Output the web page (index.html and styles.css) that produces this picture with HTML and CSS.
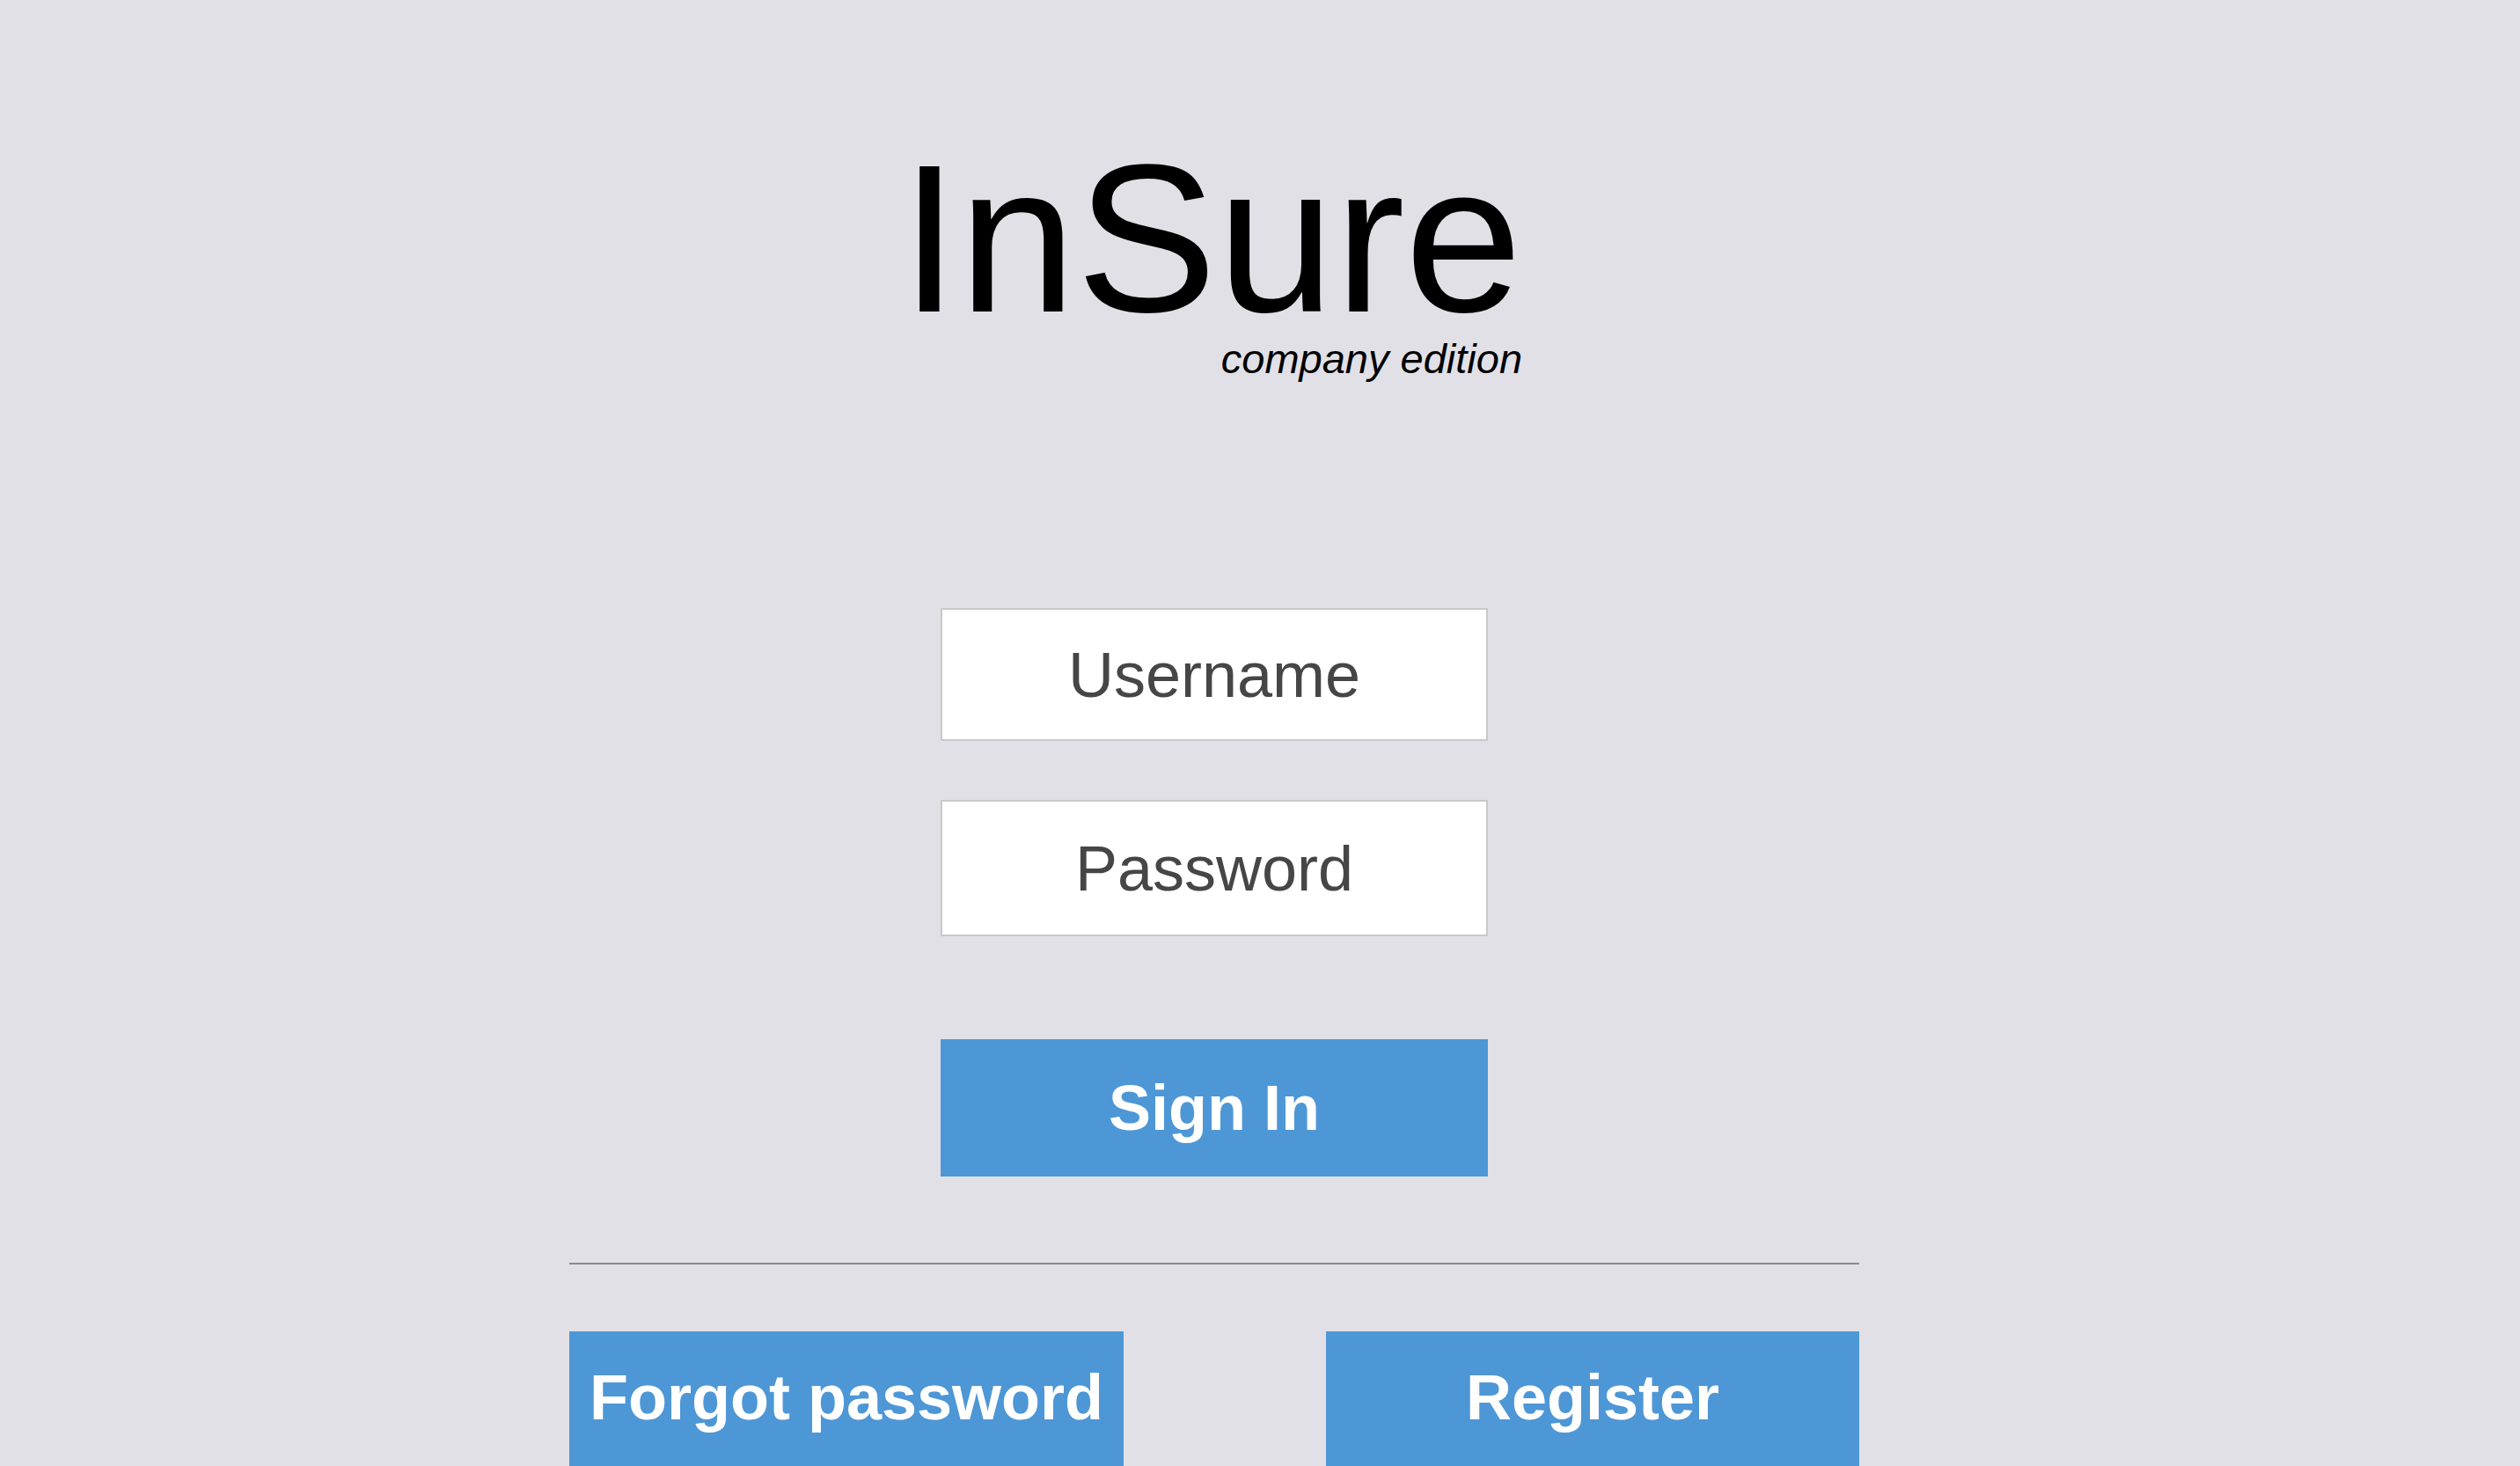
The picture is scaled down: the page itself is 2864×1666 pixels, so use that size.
FILE: index.html
```html
<!DOCTYPE html>
<html lang="en">
<head>
<meta charset="utf-8">
<title>InSure – Sign In</title>
<link rel="stylesheet" href="styles.css">
</head>
<body>
<main class="page">
  <header class="brand">
    <div class="logo">
      <div class="logo-name">InSure</div>
      <div class="logo-tag">company edition</div>
    </div>
  </header>
  <form class="login" onsubmit="return false">
    <input class="field field-user" type="text" placeholder="Username">
    <input class="field field-pass" type="password" placeholder="Password">
    <button class="btn btn-signin" type="submit">Sign In</button>
  </form>
  <hr class="divider">
  <div class="actions">
    <button class="btn btn-forgot" type="button">Forgot password</button>
    <button class="btn btn-register" type="button">Register</button>
  </div>
</main>
</body>
</html>
```
FILE: styles.css
```css
html, body {
  margin: 0;
  padding: 0;
  height: 100%;
  overflow: hidden;
}
body {
  background: #e1e0e6;
  font-family: "Liberation Sans", Arial, sans-serif;
}
.page {
  display: flex;
  flex-direction: column;
  align-items: center;
  padding: 158px 104px 0 0;
}
.brand {
  display: flex;
  justify-content: center;
}
.logo {
  display: flex;
  flex-direction: column;
  margin-right: 7px;
}
.logo-name {
  font-size: 240px;
  line-height: 226px;
  color: #000;
}
.logo-tag {
  font-size: 47px;
  line-height: 47px;
  font-style: italic;
  color: #000;
  text-align: right;
}
.login {
  display: flex;
  flex-direction: column;
  align-items: center;
  margin: 260px 0 0;
}
.field {
  box-sizing: border-box;
  width: 622px;
  background: #fff;
  border: 2px solid #c9c9cb;
  border-radius: 0;
  font-family: "Liberation Sans", Arial, sans-serif;
  font-size: 72px;
  color: #464646;
  text-align: center;
  padding: 0;
  margin: 0;
  outline: none;
}
.field::placeholder {
  color: #464646;
  opacity: 1;
}
.field-user {
  height: 151px;
  margin-bottom: 67px;
}
.field-pass {
  height: 155px;
  margin-bottom: 117px;
}
.btn {
  box-sizing: border-box;
  border: none;
  border-radius: 0;
  background: #4e97d6;
  color: #fff;
  font-family: "Liberation Sans", Arial, sans-serif;
  font-weight: bold;
  font-size: 72px;
  padding: 0;
  margin: 0;
  cursor: pointer;
}
.btn-signin {
  width: 622px;
  height: 156px;
}
.divider {
  width: 1466px;
  height: 2px;
  border: none;
  background: #898989;
  margin: 98px 0 0;
}
.actions {
  display: flex;
  justify-content: space-between;
  width: 1466px;
  margin-top: 76px;
}
.btn-forgot,
.btn-register {
  height: 155px;
  padding-bottom: 5px;
}
.btn-forgot {
  width: 630px;
}
.btn-register {
  width: 606px;
}
```
